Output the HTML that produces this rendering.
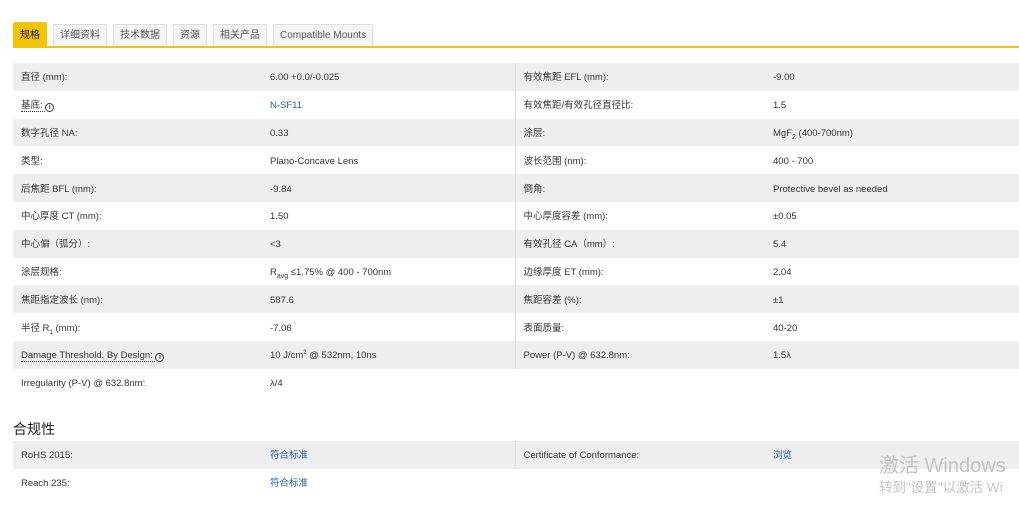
<!DOCTYPE html>
<html><head><meta charset="utf-8"><style>
*{margin:0;padding:0;box-sizing:border-box}
body{width:1019px;height:519px;background:#fff;font-family:"Liberation Sans","Noto Sans CJK SC",sans-serif;color:#333;overflow:hidden;position:relative;font-size:9.5px}
.tabs{position:absolute;left:13px;top:22px;height:25px;display:flex}
.tab{height:23px;margin-top:2px;margin-right:6px;border:1px solid #ddd;border-bottom:none;background:#f4f4f4;color:#555;font-size:10px;line-height:22px;padding:0 6px;border-radius:2px 2px 0 0}
.tab.on{background:#f5c400;border-color:#f5c400;color:#222;height:25px;margin-top:0;line-height:26px}
.line{position:absolute;left:13px;right:0;top:46px;height:2px;background:#f5c400}
table{position:absolute;left:13px;width:1006px;border-collapse:collapse;table-layout:fixed}
td{height:27.8px;padding:3px 0 0 8px;vertical-align:middle;white-space:nowrap;line-height:12px}
sub,sup{line-height:0}
tr:nth-child(odd) td{background:#eeeeee}
td.r{border-left:1px solid #ddd}
.lnk{color:#2a5a9a}
.u{border-bottom:1px dotted #333}
.i{display:inline-block;width:9px;height:9px;border:1.3px solid #333;border-radius:50%;font-size:7px;line-height:7px;text-align:center;font-weight:bold;vertical-align:-1px}
h3{position:absolute;left:13px;top:419px;font-size:14px;font-weight:normal;color:#222}
.wm{position:absolute;left:879px;color:#c4c4c4}
</style></head><body>
<div class="tabs"><div class="tab on">规格</div><div class="tab">详细资料</div><div class="tab">技术数据</div><div class="tab">资源</div><div class="tab">相关产品</div><div class="tab">Compatible Mounts</div></div>
<div class="line"></div>
<table style="top:63px">
<colgroup><col style="width:249px"><col style="width:253px"><col style="width:250px"><col></colgroup>
<tr><td>直径 (mm):</td><td>6.00 +0.0/-0.025</td><td class="r">有效焦距 EFL (mm):</td><td>-9.00</td></tr>
<tr><td><span class="u">基底: </span><span class="i">i</span></td><td class="lnk">N-SF11</td><td class="r">有效焦距/有效孔径直径比:</td><td>1.5</td></tr>
<tr><td>数字孔径 NA:</td><td>0.33</td><td class="r">涂层:</td><td>MgF<sub style="font-size:7px">2</sub> (400-700nm)</td></tr>
<tr><td>类型:</td><td>Plano-Concave Lens</td><td class="r">波长范围 (nm):</td><td>400 - 700</td></tr>
<tr><td>后焦距 BFL (mm):</td><td>-9.84</td><td class="r">倒角:</td><td>Protective bevel as needed</td></tr>
<tr><td>中心厚度 CT (mm):</td><td>1.50</td><td class="r">中心厚度容差 (mm):</td><td>±0.05</td></tr>
<tr><td>中心偏（弧分）:</td><td>&lt;3</td><td class="r">有效孔径 CA（mm）:</td><td>5.4</td></tr>
<tr><td>涂层规格:</td><td>R<sub style="font-size:7px">avg</sub> ≤1.75% @ 400 - 700nm</td><td class="r">边缘厚度 ET (mm):</td><td>2.04</td></tr>
<tr><td>焦距指定波长 (nm):</td><td>587.6</td><td class="r">焦距容差 (%):</td><td>±1</td></tr>
<tr><td>半径 R<sub style="font-size:6px">1</sub> (mm):</td><td>-7.06</td><td class="r">表面质量:</td><td>40-20</td></tr>
<tr><td><span class="u">Damage Threshold, By Design: </span><span class="i">i</span></td><td>10 J/cm<sup style="font-size:6px">2</sup> @ 532nm, 10ns</td><td class="r">Power (P-V) @ 632.8nm:</td><td>1.5λ</td></tr>
<tr><td>Irregularity (P-V) @ 632.8nm:</td><td>λ/4</td><td></td><td></td></tr>
</table>
<h3>合规性</h3>
<table style="top:441px">
<colgroup><col style="width:249px"><col style="width:253px"><col style="width:250px"><col></colgroup>
<tr><td>RoHS 2015:</td><td class="lnk">符合标准</td><td class="r">Certificate of Conformance:</td><td class="lnk">浏览</td></tr>
<tr><td>Reach 235:</td><td class="lnk">符合标准</td><td></td><td></td></tr>
</table>
<div class="wm" style="top:449px;font-size:20px">激活 Windows</div>
<div class="wm" style="top:476px;font-size:13.5px">转到"设置"以激活 Wi</div>
</body></html>
